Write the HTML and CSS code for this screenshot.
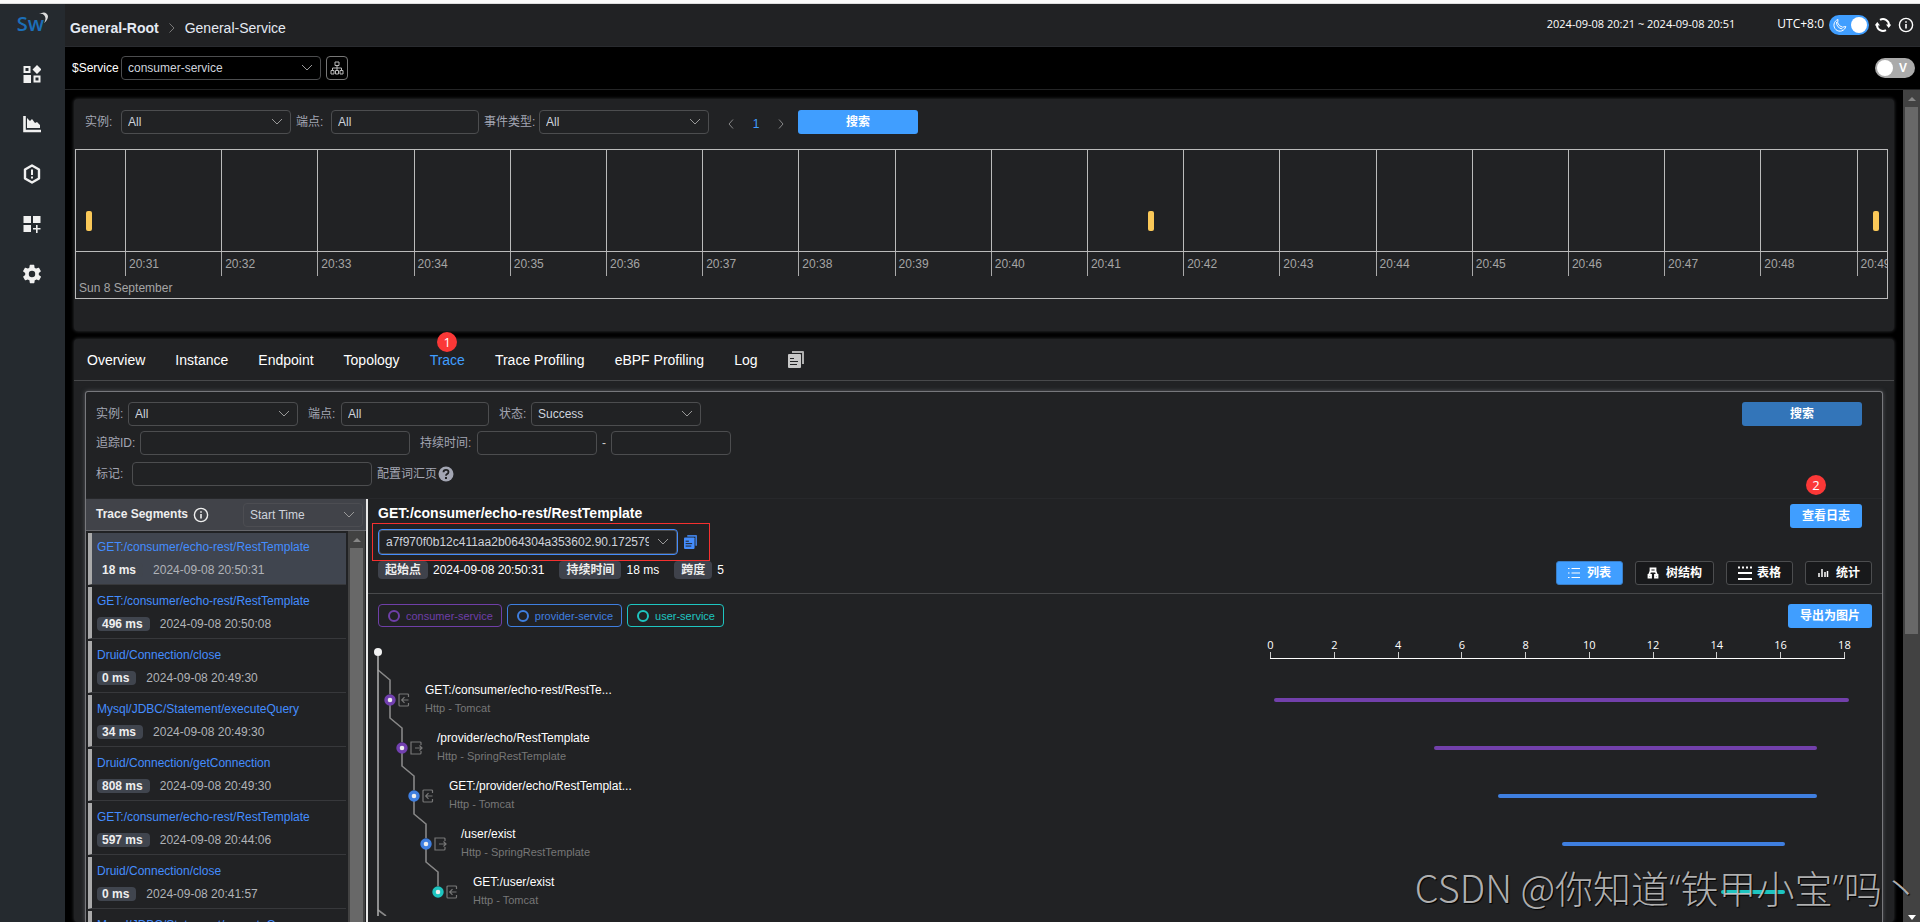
FILE: index.html
```html
<!DOCTYPE html>
<html lang="zh-CN">
<head>
<meta charset="utf-8">
<title>General-Service</title>
<link rel="stylesheet" href="styles.css">
</head>
<body>
<svg class="defs" aria-hidden="true">
  <symbol id="chev" viewBox="0 0 12 12"><path d="M1 3l5 5 5-5" fill="none" stroke="currentColor"/></symbol>
  <symbol id="info" viewBox="0 0 16 16"><circle cx="8" cy="8" r="6.6" fill="none" stroke="currentColor" stroke-width="1.4"/><path d="M7.2 7h1.6v4.6H7.2zM7.2 4.2h1.6v1.6H7.2z" fill="currentColor"/></symbol>
  <symbol id="copy" viewBox="0 0 16 17"><path d="M4 0h11q1 0 1 1v12h-2V2H4z" fill="currentColor" opacity=".85"/><path d="M1 3h11q1 0 1 1v12q0 1-1 1H1q-1 0-1-1V4q0-1 1-1z" fill="currentColor"/><path d="M2 7.5h4M2 10.5h8M2 13.5h7" stroke="#212224" stroke-width="1.2"/></symbol>
  <symbol id="entry" viewBox="0 0 12 14"><path d="M10.5 4V2q0-1-1-1H2Q1 1 1 2v10q0 1 1 1h7.500q1 0 1-1v-2M10.500 7H4M6.500 4.200L3.700 7l2.800 2.800" fill="none" stroke="currentColor" stroke-width="1.200"/></symbol>
  <symbol id="exit" viewBox="0 0 13 14"><path d="M11 4V2q0-1-1-1H1v12h9q1 0 1-1v-2M5 7h7M9.500 4.500L12 7 9.500 9.500" fill="none" stroke="currentColor" stroke-width="1.200"/></symbol>
</svg>
<div class="browser-edge"></div>
<div class="app">
  <nav class="sidebar">
    <a class="logo" href="#" aria-label="SkyWalking">Sw<svg width="9" height="12" viewBox="0 0 9 12"><path d="M0 2Q7-2 9 4q0 4-4 7 3-5 0-8Q3 1 0 2z" fill="#ddd"/></svg></a>
    <a href="#" aria-label="Marketplace"><svg width="18" height="18" viewBox="0 0 18 18"><path d="M1.500 2h5v5h-5zM11.500 11.500h5v5h-5z" fill="none" stroke="currentColor" stroke-width="2"/><path d="M.5 10h7.500v8H.5zM14 0l4.500 4.500L14 9 9.500 4.500z" fill="currentColor"/></svg></a>
    <a href="#" aria-label="Dashboards"><svg width="18" height="18" viewBox="0 0 18 18"><path d="M1.500 1v15H18" fill="none" stroke="currentColor" stroke-width="2.600"/><path d="M4 13V3l3 3 2-2 3 4 2-1 3 3v3z" fill="currentColor"/></svg></a>
    <a href="#" aria-label="Alarms"><svg width="18" height="20" viewBox="0 0 18 20"><path d="M9 1.500l7 4v9l-7 4-7-4v-9z" fill="none" stroke="currentColor" stroke-width="2.400" stroke-linejoin="round"/><path d="M8 5.500h2v5.500H8zM8 12.500h2v2H8z" fill="currentColor"/></svg></a>
    <a href="#" aria-label="Layers"><svg width="18" height="18" viewBox="0 0 18 18"><path d="M.5 1H8v7H.5zM10 1h7.500v7H10zM.5 10H8v7H.5zM13 10h1.600v2.900h2.900v1.600h-2.900V18H13v-3.500h-3v-1.600h3z" fill="currentColor"/></svg></a>
    <a href="#" aria-label="Settings"><svg width="22" height="22" viewBox="0 0 24 24"><path fill="currentColor" d="M19.400 13a7.500 7.500 0 0 0 0-2l2.100-1.600c.2-.2.300-.4.100-.7l-2-3.400c-.1-.2-.4-.3-.6-.2l-2.500 1a7.300 7.300 0 0 0-1.700-1L14.500 2.400a.5.5 0 0 0-.5-.4h-4a.5.500 0 0 0-.5.400l-.4 2.700a7.300 7.300 0 0 0-1.700 1l-2.500-1c-.2-.1-.5 0-.6.2l-2 3.400c-.1.300 0 .5.100.7L4.600 11a7.500 7.500 0 0 0 0 2l-2.100 1.600c-.2.200-.3.500-.1.700l2 3.400c.1.200.4.300.6.200l2.500-1c.5.400 1.100.7 1.700 1l.4 2.700c0 .2.200.4.500.4h4c.2 0 .5-.2.500-.4l.4-2.700a7.300 7.300 0 0 0 1.700-1l2.500 1c.2.100.5 0 .6-.2l2-3.400c.1-.2.100-.5-.1-.7zM12 15.500a3.500 3.500 0 1 1 0-7 3.500 3.500 0 0 1 0 7z"/></svg></a>
  </nav>

  <div class="main">
    <header class="topbar">
      <div class="crumbs">
        <a href="#" class="crumb-root">General-Root</a>
        <svg width="6" height="12" viewBox="0 0 6 12"><path d="M.5 1.500L5 6 .5 10.500" fill="none" stroke="#777"/></svg>
        <span>General-Service</span>
      </div>
      <div class="top-tools">
        <span class="time-range">2024-09-08 20:21 ~ 2024-09-08 20:51</span>
        <span class="utc">UTC+8:0</span>
        <button class="switch on" role="switch" aria-checked="true" aria-label="Dark theme"><svg width="14" height="14" viewBox="0 0 14 14"><path d="M5 1.500A6 6 0 1 0 12.800 8.500 5.600 5.600 0 0 1 5 1.500zM3.500 4q0 6 6 7" fill="none" stroke="#fff"/></svg><i class="knob"></i></button>
        <button class="icon-btn" aria-label="Reload"><svg width="16" height="16" viewBox="0 0 16 16"><path d="M5 2.800A6 6 0 0 1 14 8M11 13.200A6 6 0 0 1 2 8" fill="none" stroke="#fff" stroke-width="2"/><path d="M11 7.500h5.400L13.700 11zM-.4 8.500H5L2.300 5z" fill="#fff"/></svg></button>
        <button class="icon-btn" aria-label="Info"><svg width="16" height="16"><use href="#info"/></svg></button>
      </div>
    </header>

    <div class="toolbar">
      <label for="service">$Service</label>
      <span class="select w200"><select id="service"><option>consumer-service</option></select><svg><use href="#chev"/></svg></span>
      <button class="hier" aria-label="Hierarchy"><svg width="14" height="14" viewBox="0 0 14 14"><path d="M5 1h4v3.500H5zM1 9.500h3V13H1zM5.500 9.500h3V13h-3zM10 9.500h3V13h-3zM7 4.500v5M2.500 9.500V7h9v2.500" fill="none" stroke="#bbb"/></svg></button>
      <button class="switch off" role="switch" aria-checked="false" aria-label="View mode"><i class="knob"></i><span>V</span></button>
    </div>

    <div class="viewport">
      <div class="board">
        <section class="panel events">
          <div class="filters">
            <label for="ev-i" class="lab36">实例:</label>
            <span class="select w170"><select id="ev-i"><option>All</option></select><svg><use href="#chev"/></svg></span>
            <label for="ev-e" class="lab35 near">端点:</label>
            <input id="ev-e" class="w148" value="All">
            <label for="ev-t" class="lab55 near">事件类型:</label>
            <span class="select w170"><select id="ev-t"><option>All</option></select><svg><use href="#chev"/></svg></span>
            <div class="pager">
              <button aria-label="Previous"><svg width="6" height="10" viewBox="0 0 6 10"><path d="M5 .5L1 5l4 4.500" fill="none" stroke="#888"/></svg></button>
              <span>1</span>
              <button aria-label="Next"><svg width="6" height="10" viewBox="0 0 6 10"><path d="M1 .5L5 5 1 9.500" fill="none" stroke="#888"/></svg></button>
            </div>
            <button class="btn w120">搜索</button>
          </div>
          <div class="timeline">
            <div class="lanes"><i></i><i></i><i></i><i></i><i></i><i></i><i></i><i></i><i></i><i></i><i></i><i></i><i></i><i></i><i></i><i></i><i></i><i></i><i></i></div>
            <div class="ticks"><i></i><span>20:31</span><span>20:32</span><span>20:33</span><span>20:34</span><span>20:35</span><span>20:36</span><span>20:37</span><span>20:38</span><span>20:39</span><span>20:40</span><span>20:41</span><span>20:42</span><span>20:43</span><span>20:44</span><span>20:45</span><span>20:46</span><span>20:47</span><span>20:48</span><span>20:49</span></div>
            <div class="day">Sun 8 September</div>
            <b class="event" style="left:0.55%"></b>
            <b class="event" style="left:59.2%"></b>
            <b class="event" style="left:99.25%"></b>
          </div>
        </section>

        <section class="panel detail">
          <nav class="tabs">
            <a href="#">Overview</a><a href="#">Instance</a><a href="#">Endpoint</a><a href="#">Topology</a><a href="#" class="active">Trace<b class="step">1</b></a><a href="#">Trace Profiling</a><a href="#">eBPF Profiling</a><a href="#">Log</a>
            <button class="icon-btn grey" aria-label="Copy tabs"><svg width="16" height="17"><use href="#copy"/></svg></button>
          </nav>
          <div class="widget">
            <div class="query">
              <div class="filters">
                <label for="t-i" class="lab32">实例:</label>
                <span class="select w170"><select id="t-i"><option>All</option></select><svg><use href="#chev"/></svg></span>
                <label for="t-e" class="lab33 far">端点:</label>
                <input id="t-e" class="w148" value="All">
                <label for="t-s" class="lab32 far">状态:</label>
                <span class="select w170"><select id="t-s"><option>Success</option></select><svg><use href="#chev"/></svg></span>
                <button class="btn dim w120 push">搜索</button>
              </div>
              <div class="filters second">
                <label for="t-id" class="lab44">追踪ID:</label>
                <input id="t-id" class="w270">
                <label for="t-d1" class="lab57 far">持续时间:</label>
                <input id="t-d1" class="w120">
                <span class="dash">-</span>
                <input class="w120" aria-label="持续时间上限">
              </div>
              <div class="filters third">
                <label for="t-tag" class="lab36">标记:</label>
                <input id="t-tag" class="w240">
                <a href="#" class="help">配置词汇页<svg width="16" height="16" viewBox="0 0 16 16"><circle cx="8" cy="8" r="7.500" fill="#a3a6b3"/><path d="M5.500 6.200Q5.500 3.800 8 3.800t2.500 2.200Q10.500 7.300 9 8.100 8 8.700 8 9.800" fill="none" stroke="#212224" stroke-width="1.800"/><path d="M7 11h2v2H7z" fill="#212224"/></svg></a>
              </div>
            </div>
            <div class="split">
              <aside class="segments">
                <div class="seg-head">
                  <h2>Trace Segments</h2>
                  <svg width="16" height="16"><use href="#info"/></svg>
                  <span class="select w120 ghost"><select aria-label="Sort"><option>Start Time</option></select><svg><use href="#chev"/></svg></span>
                </div>
                <div class="seg-body">
                  <ul>
                    <li class="current"><a href="#">GET:/consumer/echo-rest/RestTemplate</a><p><b>18 ms</b><time>2024-09-08 20:50:31</time></p></li>
                    <li><a href="#">GET:/consumer/echo-rest/RestTemplate</a><p><b>496 ms</b><time>2024-09-08 20:50:08</time></p></li>
                    <li><a href="#">Druid/Connection/close</a><p><b>0 ms</b><time>2024-09-08 20:49:30</time></p></li>
                    <li><a href="#">Mysql/JDBC/Statement/executeQuery</a><p><b>34 ms</b><time>2024-09-08 20:49:30</time></p></li>
                    <li><a href="#">Druid/Connection/getConnection</a><p><b>808 ms</b><time>2024-09-08 20:49:30</time></p></li>
                    <li><a href="#">GET:/consumer/echo-rest/RestTemplate</a><p><b>597 ms</b><time>2024-09-08 20:44:06</time></p></li>
                    <li><a href="#">Druid/Connection/close</a><p><b>0 ms</b><time>2024-09-08 20:41:57</time></p></li>
                    <li><a href="#">Mysql/JDBC/Statement/executeQuery</a></li>
                  </ul>
                  <div class="sbar"><i class="up"></i><i class="thumb"></i></div>
                </div>
              </aside>
              <div class="trace">
                <div class="trace-head">
                  <div class="trace-info">
                    <h2>GET:/consumer/echo-rest/RestTemplate</h2>
                    <div class="marked">
                      <span class="select focus w300"><select aria-label="Trace ID"><option>a7f970f0b12c411aa2b064304a353602.90.17257998312340001</option></select><svg><use href="#chev"/></svg></span>
                      <button class="icon-btn blue" aria-label="Copy trace ID"><svg width="13" height="14"><use href="#copy"/></svg></button>
                    </div>
                    <div class="facts"><b>起始点</b><span>2024-09-08 20:50:31</span><b>持续时间</b><span>18 ms</span><b>跨度</b><span>5</span></div>
                  </div>
                  <div class="trace-actions">
                    <button class="btn w72">查看日志<b class="step">2</b></button>
                    <div class="views">
                      <button class="view active"><svg width="12" height="12" viewBox="0 0 12 12"><path d="M3.500 1.500H12M3.500 6H12M3.500 10.500H12M0 1.500h1.500M0 6h1.500M0 10.500h1.500" stroke="#fff" stroke-width="1.200"/></svg>列表</button>
                      <button class="view"><svg width="12" height="12" viewBox="0 0 12 12"><path d="M3.500 1.500h5v3h-5zM3.500 4L2 8M8.500 4L10 8M1.500 8h2.500v2.500H1.500zM8 8h2.500v2.500H8z" fill="none" stroke="#fff" stroke-width="1.800"/></svg>树结构</button>
                      <button class="view tight"><svg width="14" height="14" viewBox="0 0 14 14"><path d="M0 1.500h14" stroke="#fff" stroke-width="2" stroke-dasharray="2"/><path d="M0 7h14M0 13h14" stroke="#fff" stroke-width="2"/></svg>表格</button>
                      <button class="view"><svg width="12" height="12" viewBox="0 0 12 12"><path d="M2 6v4M5 2v8M8 5v5M10.500 4v6" stroke="#fff" stroke-width="1.500"/></svg>统计</button>
                    </div>
                  </div>
                </div>
                <div class="trace-body">
                  <div class="legend">
                    <span class="tag purple"><i></i>consumer-service</span>
                    <span class="tag azure"><i></i>provider-service</span>
                    <span class="tag teal"><i></i>user-service</span>
                    <button class="btn w84 push">导出为图片</button>
                  </div>
                  <div class="canvas">
                    <svg class="tree" width="90" height="280" viewBox="0 0 90 280">
                      <g fill="none" stroke="#888" stroke-width="1.600">
                        <path d="M10 34l12 10v14M22 68v14l12 10v14M34 116v14l12 10v14M46 164v14l12 10v14M58 212v14l12 10v14M10 274l8 6"/>
                        <path d="M10 20v260" stroke="#aaa"/>
                      </g>
                      <circle cx="10" cy="16" r="4" fill="#f2f2f2"/>
                      <g fill="#eee" stroke-width="3.400">
                        <circle cx="22" cy="64" r="4" stroke="#7240b0"/><circle cx="34" cy="112" r="4" stroke="#7240b0"/>
                        <circle cx="46" cy="160" r="4" stroke="#3f7fe0"/><circle cx="58" cy="208" r="4" stroke="#3f7fe0"/>
                        <circle cx="70" cy="256" r="4" stroke="#1ec5c0"/>
                      </g>
                      <g color="#777">
                        <use href="#entry" x="30" y="57" width="12" height="14"/><use href="#exit" x="42" y="105" width="13" height="14"/>
                        <use href="#entry" x="54" y="153" width="12" height="14"/><use href="#exit" x="66" y="201" width="13" height="14"/>
                        <use href="#entry" x="78" y="249" width="12" height="14"/>
                      </g>
                    </svg>
                    <div class="axis"><div class="scale"><span>0</span><span>2</span><span>4</span><span>6</span><span>8</span><span>10</span><span>12</span><span>14</span><span>16</span><span>18</span></div></div>
                    <div class="span-row d1"><div><h3>GET:/consumer/echo-rest/RestTe...</h3><p>Http - Tomcat</p></div><div><i class="bar purple" style="margin-left:0;width:100%"></i></div></div>
                    <div class="span-row d2"><div><h3>/provider/echo/RestTemplate</h3><p>Http - SpringRestTemplate</p></div><div><i class="bar purple" style="margin-left:27.8%;width:66.7%"></i></div></div>
                    <div class="span-row d3"><div><h3>GET:/provider/echo/RestTemplat...</h3><p>Http - Tomcat</p></div><div><i class="bar azure" style="margin-left:38.9%;width:55.6%"></i></div></div>
                    <div class="span-row d4"><div><h3>/user/exist</h3><p>Http - SpringRestTemplate</p></div><div><i class="bar azure" style="margin-left:50%;width:38.9%"></i></div></div>
                    <div class="span-row d5"><div><h3>GET:/user/exist</h3><p>Http - Tomcat</p></div><div><i class="bar teal" style="margin-left:77.8%;width:11.1%"></i></div></div>
                  </div>
                </div>
              </div>
            </div>
          </div>
        </section>
      </div>
      <div class="sbar page"><i class="up"></i><i class="thumb"></i><i class="rest"></i><i class="down"></i></div>
    </div>
  </div>
</div>
<div class="watermark">CSDN @你知道<span>“</span>铁甲小宝<span>”</span>吗丶</div>
</body>
</html>
```

FILE: styles.css
```css
* { box-sizing: border-box; margin: 0; padding: 0; }
body {
  height: 100vh; display: flex; flex-direction: column; overflow: hidden;
  background: #000; color: #eee;
  font: 12px/16px "Liberation Sans", "Noto Sans CJK SC", sans-serif;
}
button, input, select { font: inherit; color: inherit; background: none; border: 0; }
a { color: inherit; text-decoration: none; }
ul { list-style: none; }
.defs { position: absolute; width: 0; height: 0; }
.browser-edge { height: 4px; flex: none; background: #fafafa; border-bottom: 1px solid #ddd; }
.app { flex: 1; min-height: 0; display: flex; }

/* sidebar */
.sidebar { width: 65px; flex: none; padding-right: 2px; background: #252a2f; color: #f0f0f0; display: flex; flex-direction: column; align-items: center; }
.sidebar a { height: 50px; display: flex; align-items: center; justify-content: center; }
.sidebar .logo { height: 45px; padding: 0 0 6px 2px; font: 600 20px/24px "Open Sans", sans-serif; color: #1c6fb8; }
.logo svg { margin: -12px 0 0 -5px; }

.main { flex: 1; min-width: 0; display: flex; flex-direction: column; }
.topbar { height: 43px; flex: none; display: flex; align-items: center; justify-content: space-between; padding: 0 6px 0 5px; background: #212224; border-bottom: 1px solid #292b2f; }
.crumbs { display: flex; align-items: center; gap: 10px; font-size: 14px; padding-top: 6px; color: #e5eaf3; }
.crumb-root { font-weight: bold; }
.top-tools { display: flex; align-items: center; }
.time-range { font: 11px/16px "Open Sans", sans-serif; margin-right: 42px; color: #fff; }
.utc { font: 12px/16px "Open Sans", sans-serif; margin-right: 5px; color: #fff; }
.time-range, .utc { margin-bottom: 2px; }
.switch { width: 40px; height: 20px; border-radius: 10px; display: flex; align-items: center; justify-content: space-between; padding: 0 2px 0 4px; }
.switch.on { background: #409eff; }
.knob { width: 16px; height: 16px; border-radius: 50%; background: #fff; }
.switch.off { background: #aaa; margin-left: auto; padding: 0 8px 0 2px; font-weight: bold; }
.icon-btn { display: flex; margin-left: 6px; color: #fff; }
.icon-btn + .icon-btn { margin-left: 7px; }
.icon-btn.grey { margin: 0; color: #c8c8c8; }
.icon-btn.blue { color: #448dfe; margin: 0; }

.toolbar { height: 43px; flex: none; display: flex; align-items: center; padding: 0 5px 0 7px; border-bottom: 1px solid #242526; color: #fff; }
.toolbar label { width: 49px; }
.hier { width: 22px; height: 24px; margin-left: 5px; border: 1px solid #777; border-radius: 4px; display: flex; align-items: center; justify-content: center; }

/* form controls */
.select { display: grid; align-items: center; flex: none; color: #cfd3dc; }
.select > * { grid-area: 1 / 1; }
.select > svg { width: 12px; height: 12px; justify-self: end; margin-right: 8px; color: #999; pointer-events: none; }
.select select { appearance: none; width: 100%; height: 24px; padding: 0 28px 0 6px; border: 1px solid #4c4d4f; border-radius: 4px; }
input { height: 24px; padding: 0 6px; border: 1px solid #4c4d4f; border-radius: 4px; color: #cfd3dc; }
.w72 { width: 72px; } .w84 { width: 84px; } .w120 { width: 120px; } .w148 { width: 148px; } .w170 { width: 170px; }
.w200 { width: 200px; } .w240 { width: 240px; } .w270 { width: 270px; } .w300 { width: 300px; }
.btn { position: relative; height: 24px; border-radius: 3px; background: #409eff; color: #fff; font-weight: bold; }
.btn.dim { background: #3375b9; }
.push { margin-left: auto; }
.filters { display: flex; align-items: center; color: #a3a6b3; }
.filters label { white-space: nowrap; }
.near { margin-left: 5px; } .far { margin-left: 10px; }
.lab32 { width: 32px; } .lab33 { width: 33px; } .lab35 { width: 35px; } .lab36 { width: 36px; }
.lab44 { width: 44px; } .lab55 { width: 55px; } .lab57 { width: 57px; }

/* board */
.viewport { flex: 1; min-height: 0; display: flex; }
.board { flex: 1; min-width: 0; display: flex; flex-direction: column; gap: 8px; padding: 9px 9px 0; overflow: hidden; }
.panel { background: #212224; border-radius: 4px; box-shadow: 0 0 3px 1px #212224; }
.sbar { width: 17px; flex: none; display: flex; flex-direction: column; align-items: center; background: #424242; }
.sbar .up { margin: 7px 0 6px; border: 4px solid transparent; border-top: 0; border-bottom-color: #868686; }
.sbar .thumb { width: 13px; flex: 524; background: #686868; }
.sbar .rest { flex: 278; }
.sbar .down { margin: 2px 0; border: 4px solid transparent; border-bottom: 0; border-top: 5px solid #fff; }

.events { flex: none; padding: 11px 6px 32px 1px; }
.events .filters { padding-left: 10px; margin-bottom: 15px; }
.pager { display: flex; align-items: center; justify-content: space-between; width: 56px; margin: 3px 14px 0 19px; color: #409eff; }
.pager button { display: flex; }
.timeline { position: relative; border: 1px solid #bbb; color: #a5a5a5; }
.lanes, .ticks { display: grid; grid-template-columns: minmax(0, 200fr) repeat(18, minmax(0, 385fr)) minmax(0, 118fr); }
.lanes { height: 102px; border-bottom: 1px solid #bbb; }
.lanes i { grid-row: 1; border-right: 1px solid #bbb; }
.ticks { height: 24px; }
.ticks span { border-left: 1px solid #aaa; margin-left: -1px; padding: 4px 0 0 3px; overflow: hidden; }
.day { padding: 4px 3px 2px; }
.event { position: absolute; top: 61px; width: 6px; height: 20px; border-radius: 2px; background: #fac858; }

.detail { flex: 1; min-height: 0; display: flex; flex-direction: column; }
.tabs { height: 42px; flex: none; display: flex; align-items: center; gap: 30px; padding-left: 13px; border-bottom: 1px solid #48494b; font-size: 14px; color: #fff; }
.tabs a { position: relative; }
.tabs .active { color: #409eff; }
.step { position: absolute; left: 50%; margin-left: -10px; width: 20px; height: 20px; border-radius: 50%; background: #fb3837; color: #fff; font: 13px/20px "Open Sans", sans-serif; text-align: center; z-index: 2; }
.tabs .step { top: -20px; }
.btn .step { top: -29px; margin-left: -20px; }

.widget { flex: 1; min-height: 0; display: flex; flex-direction: column; margin: 10px 11px 0; border: 1px solid #77787c; border-bottom: 0; border-radius: 3px 3px 0 0; box-shadow: 0 0 4px #55565a; overflow: hidden; }
.query { flex: none; padding: 10px 20px 12px 10px; border-bottom: 1px solid #27282b; }
.second { margin-top: 5px; } .third { margin-top: 7px; }
.dash { width: 14px; text-align: center; color: #ccc; }
.help { display: flex; align-items: center; margin-left: 5px; gap: 1px; }

.split { flex: 1; min-height: 0; display: flex; }
.segments { width: 282px; flex: none; display: flex; flex-direction: column; border-right: 2px solid #e8e8e8; }
.seg-head { height: 32px; flex: none; display: flex; align-items: center; padding: 0 3px 0 10px; background: #414349; border-bottom: 1px solid #66676c; }
.seg-head h2 { font-size: 12px; line-height: 16px; margin: 0 5px 2px 0; }
.ghost { margin-left: auto; }
.ghost select { border-color: #4c4d52; }
.seg-body { flex: 1; min-height: 0; display: flex; padding-right: 1px; }
.seg-body ul { flex: 1; padding: 2px 2px 0; overflow: hidden; }
.seg-body li { height: 52px; margin-bottom: 2px; padding: 6px 0 0 5px; border-left: 4px solid #aaa; border-bottom: 1px solid #37383b; }
.seg-body .current { background: #40454f; }
.seg-body li a { color: #448dfe; display: block; }
.seg-body p { display: flex; align-items: center; margin-top: 8px; height: 14px; color: #b0b3b8; }
.seg-body b { background: #40454e; border-radius: 4px; padding: 0 7px 0 5px; line-height: 14px; margin-right: 10px; color: #eee; }

.trace { flex: 1; min-width: 0; display: flex; flex-direction: column; }
.trace-head { flex: none; display: flex; justify-content: space-between; padding: 5px 10px 0; border-bottom: 1px solid #48494b; }
.trace-info { padding-bottom: 14px; }
.trace-info h2 { font-size: 14px; line-height: 19px; color: #fff; }
.marked { display: flex; align-items: center; gap: 6px; width: 338px; height: 38px; margin-left: -6px; padding-left: 5px; border: 1px solid #f5302f; }
.focus select { height: 26px; border: 1px solid #448dfe; box-shadow: inset 0 0 0 1px #4c4d4f; padding-left: 7px; }
.focus > svg { margin-right: 9px; }
.facts { display: flex; align-items: center; }
.facts b { background: #3f424b; border-radius: 4px; padding: 0 7px; line-height: 18px; }
.facts span { margin: 0 15px 0 5px; color: #fff; }
.trace-actions { display: flex; flex-direction: column; justify-content: space-between; align-items: flex-end; padding-bottom: 8px; }
.trace-actions .btn { margin-right: 10px; }
.views { display: flex; gap: 12px; }
.view { height: 24px; display: flex; align-items: center; gap: 7px; padding: 0 11px; border: 1px solid #4c4d4f; border-radius: 3px; background: #18191b; color: #fff; font-weight: bold; }
.view.tight { gap: 5px; }
.view.active { background: #409eff; border-color: #3a7fc8; }

.trace-body { flex: 1; min-height: 0; padding: 10px 10px 0; overflow: hidden; }
.legend { display: flex; gap: 5px; align-items: flex-start; font-size: 11px; }
.legend .btn { font-size: 12px; }
.tag { height: 23px; display: flex; align-items: center; gap: 6px; padding: 0 8px 0 9px; border: 1px solid; border-radius: 4px; }
.tag i { width: 12px; height: 12px; border: 2px solid; border-radius: 50%; }
.tag.purple { color: #6f3fa8; } .tag.azure { color: #3f7fe0; } .tag.teal { color: #1ec5c0; }
.canvas { position: relative; }
.tree { position: absolute; left: -10px; top: 8px; }
.axis, .span-row { display: grid; }
.axis { grid-template-columns: 892fr 575fr 27fr; padding-top: 9px; margin-bottom: 17px; }
.scale { grid-column: 2; display: flex; justify-content: space-between; border-bottom: 1px solid #fff; font: 11px/15px "Open Sans", sans-serif; color: #fff; }
.scale span { width: 1px; display: flex; flex-direction: column; align-items: center; }
.scale span::after { content: ""; width: 1px; height: 6px; background: #ccc; }
.span-row { height: 48px; grid-template-columns: 896fr 575fr 23fr; align-items: center; }
.span-row h3 { font-weight: normal; font-size: 12px; line-height: 16px; color: #fff; }
.span-row p { font-size: 11px; line-height: 16px; margin: 2px 0; color: #777; }
.d1 { --pad: 47px; } .d2 { --pad: 59px; } .d3 { --pad: 71px; } .d4 { --pad: 83px; } .d5 { --pad: 95px; }
.span-row > div:first-child { padding-left: var(--pad); }
.bar { display: block; height: 4px; border-radius: 2px; }
.bar.purple { background: #7240ab; } .bar.azure { background: #3f7fe0; } .bar.teal { background: #1ec5c0; }

.watermark { position: absolute; right: 0; bottom: 8px; font: 300 38px/52px "Noto Sans CJK SC", sans-serif; color: rgba(205, 205, 205, .85); text-shadow: 1px 1px 1px #000; pointer-events: none; white-space: nowrap; }
.watermark span { font-family: "Open Sans", sans-serif; }
```
